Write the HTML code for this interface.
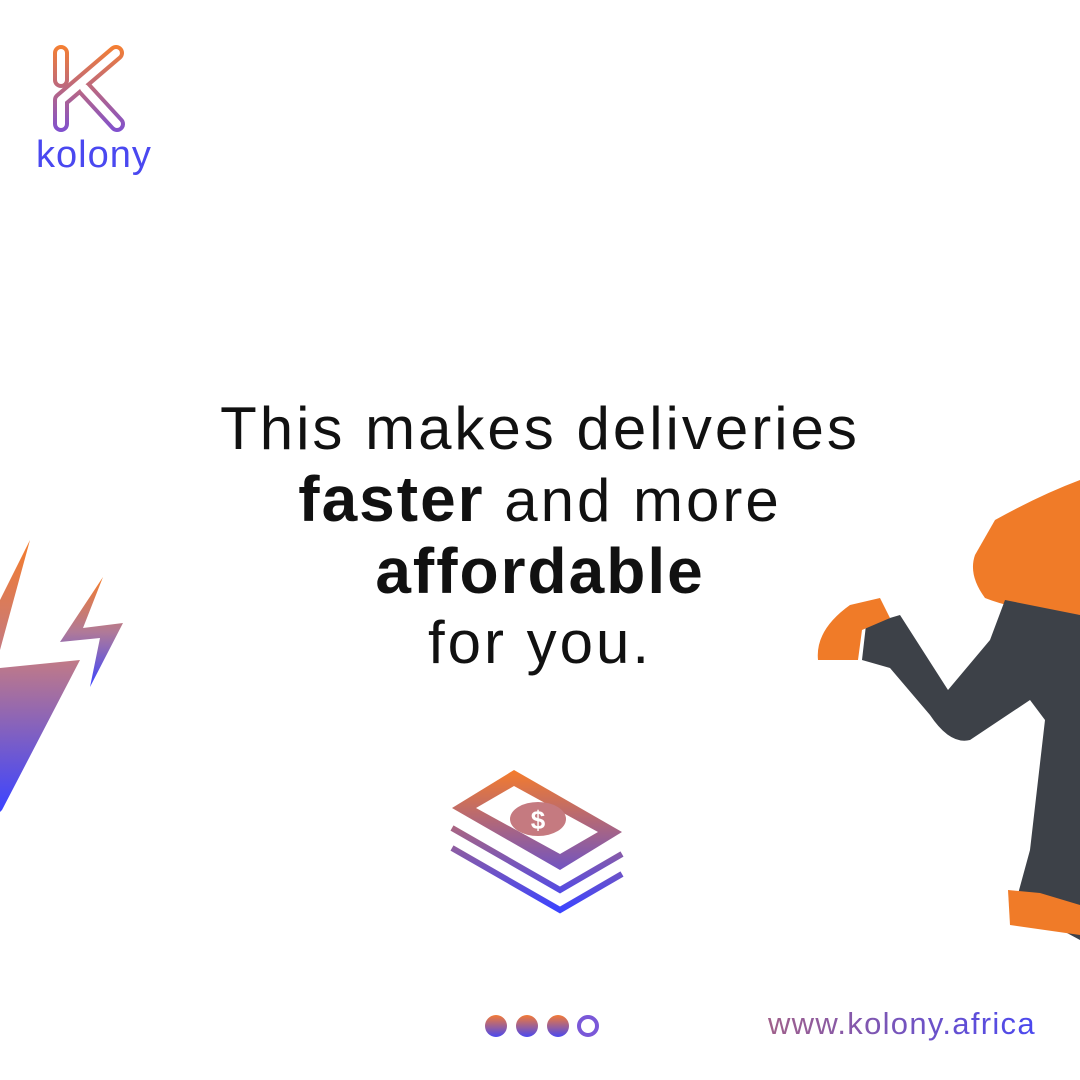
<!DOCTYPE html>
<html><head><meta charset="utf-8"><style>
html,body{margin:0;padding:0;background:#fff}
.page{position:relative;width:1080px;height:1080px;overflow:hidden;background:#fff;font-family:"Liberation Sans",sans-serif}
.txt{position:absolute;left:0;width:1080px;text-align:center;color:#111;font-size:60px;line-height:70px;top:394px;letter-spacing:3px}
.txt b{font-weight:900;letter-spacing:2px;font-size:64px}
.url{position:absolute;left:768px;top:1006px;font-size:31px;letter-spacing:1.3px;background:linear-gradient(90deg,#a0608a,#4a48f0);-webkit-background-clip:text;background-clip:text;color:transparent}
.logo-t{position:absolute;left:36px;top:134px;font-size:38px;color:#4a48f0;letter-spacing:1px}
.dot{position:absolute;top:1015px;width:22px;height:22px;border-radius:50%;background:linear-gradient(#f47a35,#4a48f0)}
</style></head><body><div class="page">
<svg width="1080" height="1080" style="position:absolute;left:0;top:0">
<defs>
<linearGradient id="gb" gradientUnits="userSpaceOnUse" x1="0" y1="540" x2="0" y2="810"><stop offset="0" stop-color="#f57c2b"/><stop offset="0.45" stop-color="#c07a88"/><stop offset="1" stop-color="#3c44ff"/></linearGradient>
<linearGradient id="gs" gradientUnits="userSpaceOnUse" x1="0" y1="577" x2="0" y2="687"><stop offset="0" stop-color="#f57c2b"/><stop offset="0.5" stop-color="#b07a98"/><stop offset="1" stop-color="#3c44ff"/></linearGradient>
<linearGradient id="gm" gradientUnits="userSpaceOnUse" x1="0" y1="770" x2="0" y2="910"><stop offset="0" stop-color="#f57c2b"/><stop offset="1" stop-color="#3c44ff"/></linearGradient>
<linearGradient id="gk" gradientUnits="userSpaceOnUse" x1="0" y1="44" x2="0" y2="132"><stop offset="0" stop-color="#f7802f"/><stop offset="1" stop-color="#7f50d0"/></linearGradient>
</defs>
<!-- K logo outlined -->
<g fill="none" stroke-linecap="round" stroke-linejoin="round">
<g stroke="url(#gk)" stroke-width="16">
<path d="M61 53 L61 80"/><path d="M116 53 L61 100 L61 124"/><path d="M84 88 L117 124"/>
</g>
<g stroke="#fff" stroke-width="8">
<path d="M61 53 L61 80"/><path d="M116 53 L61 100 L61 124"/><path d="M84 88 L117 124"/>
</g>
</g>
<!-- bolts -->
<polygon points="30,540 0,600 0,650" fill="url(#gb)"/>
<polygon points="0,668 80,660 2,810 0,812 0,720 24,718 0,720" fill="url(#gb)"/>
<polygon points="103,577 60,642 100,638 90,687 123,623 83,628" fill="url(#gs)"/>
<!-- money -->
<g>
<polygon points="452,808 514,770 622,832 560,870" fill="url(#gm)"/>
<polygon points="476,808 514,786 598,832 560,854" fill="#fff"/>
<ellipse cx="538" cy="819" rx="28" ry="17" fill="#c57a80"/>
<text x="538" y="829" font-size="26" font-weight="bold" fill="#fff" text-anchor="middle" font-family="Liberation Sans">$</text>
<polyline points="452,828 560,890 622,854" fill="none" stroke="url(#gm)" stroke-width="6"/>
<polyline points="452,848 560,910 622,874" fill="none" stroke="url(#gm)" stroke-width="6"/>
</g>
<!-- runner -->
<path d="M995 520 Q1040 495 1080 480 L1080 615 Q1020 612 985 598 Q968 575 975 555 Z" fill="#f07b28"/>
<path d="M1005 600 L1080 615 L1080 940 L1015 905 L1030 850 L1045 720 L1030 700 L970 740 Q950 745 930 715 L890 668 L862 660 L866 625 L900 615 L948 690 L990 640 Z" fill="#3d4148"/>
<path d="M818 660 Q815 630 850 605 L880 598 L890 618 L862 630 L858 660 Z" fill="#f07b28"/>
<path d="M1008 890 L1040 893 L1080 905 L1080 935 L1010 925 Z" fill="#f07b28"/>
</svg>
<div class="logo-t">kolony</div>
<div class="txt">This makes deliveries<br><b>faster</b> and more<br><b>affordable</b><br>for you.</div>
<div class="dot" style="left:485px"></div>
<div class="dot" style="left:516px"></div>
<div class="dot" style="left:547px"></div>
<div class="dot" style="left:577px;background:none;border:4px solid #7a58d8;width:14px;height:14px"></div>
<div class="url">www.kolony.africa</div>
</div></body></html>
